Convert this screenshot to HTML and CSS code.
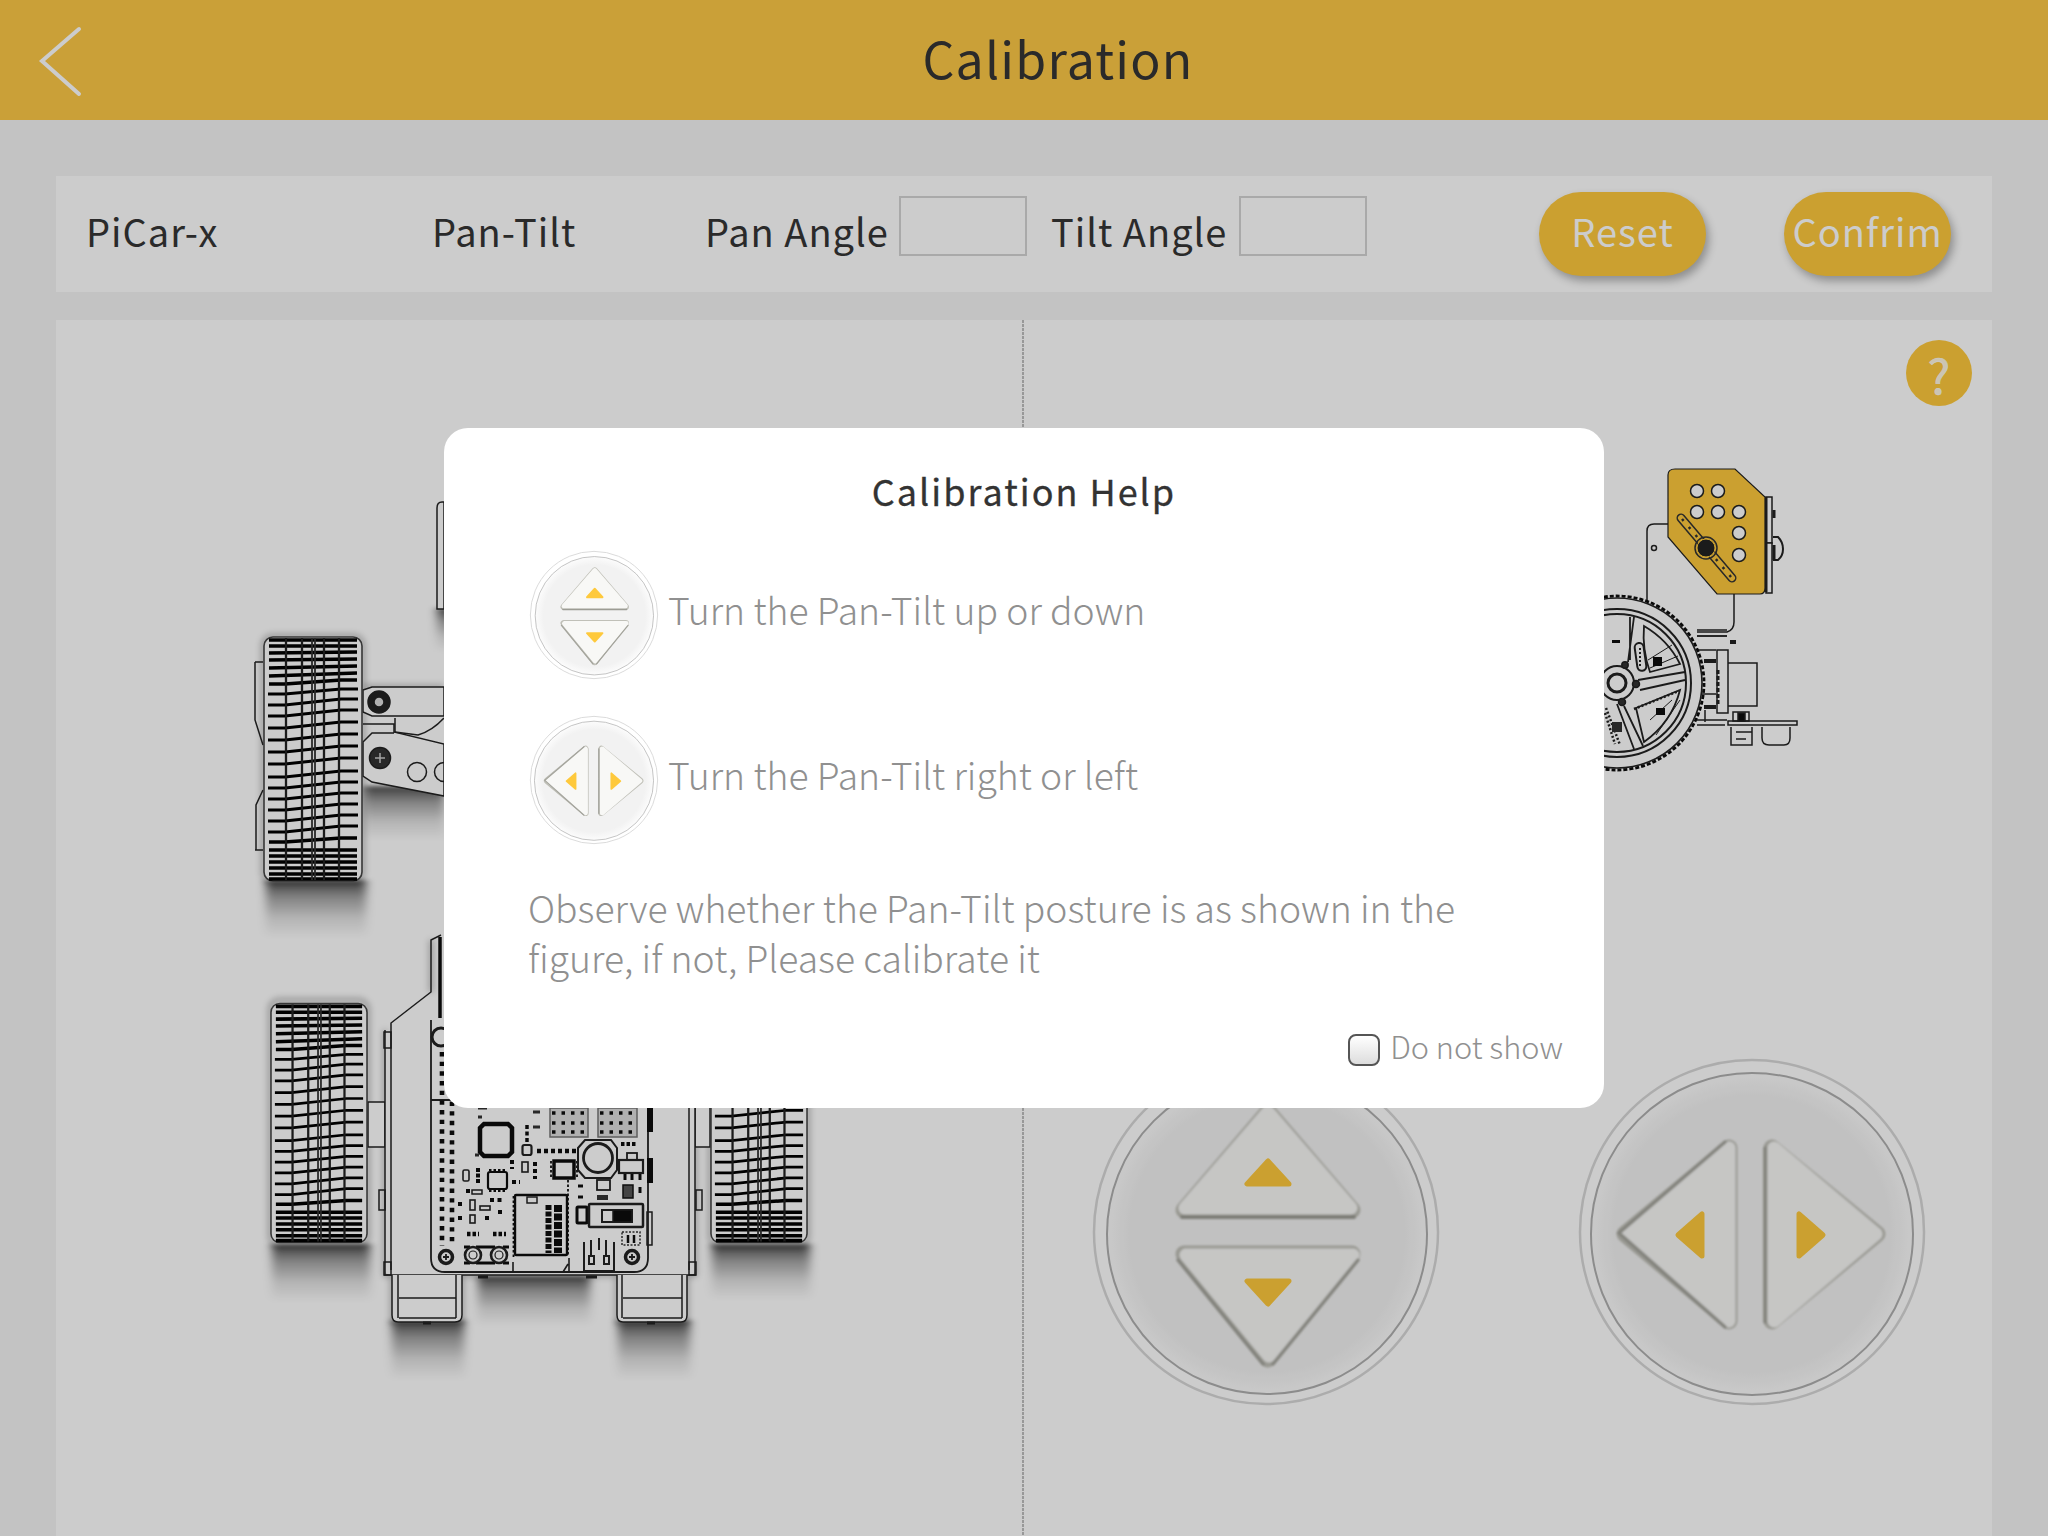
FILE: index.html
```html
<!DOCTYPE html>
<html lang="en">
<head>
<meta charset="utf-8">
<title>Calibration</title>
<link rel="stylesheet" href="styles.css">
</head>
<body>
<svg class="defs" width="0" height="0" aria-hidden="true">
  <defs>
    <radialGradient id="btn-fill">
      <stop offset="0" stop-color="#f2f2f2"/>
      <stop offset=".86" stop-color="#f2f2f2"/>
      <stop offset="1" stop-color="#fcfcfc"/>
    </radialGradient>
    <linearGradient id="shade" x1="0" y1="0" x2="0" y2="1">
      <stop offset="0" stop-color="#000" stop-opacity=".7"/>
      <stop offset=".3" stop-color="#000" stop-opacity=".36"/>
      <stop offset=".65" stop-color="#000" stop-opacity=".12"/>
      <stop offset="1" stop-color="#000" stop-opacity="0"/>
    </linearGradient>
    <filter id="soft" x="-10%" y="-10%" width="120%" height="120%"><feGaussianBlur stdDeviation=".7"/></filter>
    <filter id="soft2" x="-10%" y="-10%" width="120%" height="120%"><feGaussianBlur stdDeviation=".8"/></filter>
    <filter id="blurx" x="-20%" y="-20%" width="140%" height="140%"><feGaussianBlur stdDeviation="5 2"/></filter>
    <filter id="halo" x="-20%" y="-20%" width="140%" height="140%"><feGaussianBlur stdDeviation="3"/></filter>

    <symbol id="pad-ud" viewBox="-173 -173 346 346" overflow="visible">
      <circle r="172" fill="#fff" stroke="#d8d8d8" stroke-width="2.5"/>
      <circle cx="1" cy="2" r="160" fill="url(#btn-fill)" stroke="#b0b0b0" stroke-width="2"/>
      <g filter="url(#soft2)">
        <path d="M2 -120 -82 -22H86Z" fill="#f8f8f6" stroke="#c0c0b8" stroke-width="17" stroke-linejoin="round"/>
        <path d="M2 -120 -81 -24H85Z" fill="#f8f8f6" stroke="#f8f8f6" stroke-width="13" stroke-linejoin="round"/>
        <path d="M-84 -15H88" fill="none" stroke="#9c9c94" stroke-width="4" stroke-linecap="round"/>
        <path d="M2 127 -82 22H86Z" fill="#f8f8f6" stroke="#c0c0b8" stroke-width="17" stroke-linejoin="round"/>
        <path d="M3 124 -80 23H87Z" fill="#f8f8f6" stroke="#f8f8f6" stroke-width="13" stroke-linejoin="round"/>
        <path d="M-88 28 -3 132M92 28 7 132" fill="none" stroke="#a4a49c" stroke-width="3.5" stroke-linecap="round"/>
      </g>
      <path d="M2 -71 -19 -48H23Z" fill="#fec93c" stroke="#fec93c" stroke-width="5" stroke-linejoin="round"/>
      <path d="M2 72 -19 49H23Z" fill="#fec93c" stroke="#fec93c" stroke-width="5" stroke-linejoin="round"/>
    </symbol>

    <symbol id="pad-lr" viewBox="-173 -173 346 346" overflow="visible">
      <circle r="172" fill="#fff" stroke="#d8d8d8" stroke-width="2.5"/>
      <circle cy="2" r="161" fill="url(#btn-fill)" stroke="#b0b0b0" stroke-width="2"/>
      <g filter="url(#soft2)">
        <path d="M-127 2 -23 -84V89Z" fill="#f8f8f6" stroke="#c0c0b8" stroke-width="17" stroke-linejoin="round"/>
        <path d="M-125 1 -23 -84V89Z" fill="#f8f8f6" stroke="#f8f8f6" stroke-width="13" stroke-linejoin="round"/>
        <path d="M-27 -90 -133 1 -27 95" fill="none" stroke="#a4a49c" stroke-width="3.5" stroke-linecap="round"/>
        <path d="M125 2 20 -84V89Z" fill="#f8f8f6" stroke="#c0c0b8" stroke-width="17" stroke-linejoin="round"/>
        <path d="M124 2 22 -84V89Z" fill="#f8f8f6" stroke="#f8f8f6" stroke-width="13" stroke-linejoin="round"/>
        <path d="M13 -84V90" fill="none" stroke="#a4a49c" stroke-width="3.5" stroke-linecap="round"/>
      </g>
      <path d="M-74 3 -50 -18V24Z" fill="#fec93c" stroke="#fec93c" stroke-width="5" stroke-linejoin="round"/>
      <path d="M71 3 47 -18V24Z" fill="#fec93c" stroke="#fec93c" stroke-width="5" stroke-linejoin="round"/>
    </symbol>

    <symbol id="wheel" viewBox="0 0 100 246" overflow="visible">
      <rect x="1" y="1" width="98" height="244" rx="9" fill="#fff" stroke="#444" stroke-width="1.6"/>
      <g fill="none" stroke="#000">
        <path stroke-width="3.6" d="M6 4H94M6 10H94M6 17 94 16M6 24 94 23M6 32 94 30M6 40 94 37M6 48H22L78 44H94M6 206H22L78 202H94M6 214H94M6 220H94M6 226H94M6 232H94M6 238H94M6 243H94"/>
        <path stroke-width="2.8" d="M5 58H22L78 53H95M5 69H22L78 63H95M5 80H22L78 74H95M5 92H22L78 86H95M5 104H22L78 98H95M5 116H22L78 110H95M5 128H22L78 122H95M5 141H22L78 135H95M5 152H22L78 146H95M5 163H22L78 157H95M5 174H22L78 168H95M5 185H22L78 179H95M5 196H22L78 190H95"/>
        <path stroke-width="2.3" stroke="#222" d="M23 2V244M39 2V244M61 2V244M76 2V244"/>
        <path stroke-width="1.8" stroke="#333" d="M49 2V244M52 2V244"/>
      </g>
    </symbol>
  </defs>
</svg>

<div class="app">
  <header class="topbar">
    <svg class="back" viewBox="0 0 44 72" aria-label="Back">
      <path d="M41 3 4 35 41 68"/>
    </svg>
    <h1 class="topbar-title">Calibration</h1>
  </header>

  <main class="content">
    <section class="toolbar">
      <span class="tool-text tool-model">PiCar-x</span>
      <span class="tool-text tool-part">Pan-Tilt</span>
      <label class="tool-text tool-field tool-pan">Pan Angle<input class="angle" type="text"></label>
      <label class="tool-text tool-field tool-tilt">Tilt Angle<input class="angle" type="text"></label>
      <button class="pill pill-reset" type="button">Reset</button>
      <button class="pill pill-confirm" type="button">Confrim</button>
    </section>

    <section class="stage">
      <div class="half half-left">
        <svg class="art" viewBox="56 320 968 1216">
          <!-- shadows -->
          <g filter="url(#halo)" fill="none" stroke="#000" stroke-opacity=".4" stroke-width="3">
            <rect x="263" y="636" width="100" height="246" rx="9"/>
            <rect x="270" y="1000" width="98" height="246" rx="9"/>
            <rect x="710" y="1000" width="98" height="246" rx="9"/>
            <path d="M363 687H444M385 1030V1275H695V1030M392 1275V1322H462V1275M617 1275V1322H687V1275M431 992V940"/>
          </g>
          <g filter="url(#blurx)">
            <rect x="266" y="880" width="100" height="58" fill="url(#shade)"/>
            <rect x="364" y="786" width="80" height="54" fill="url(#shade)"/>
            <rect x="437" y="608" width="20" height="44" fill="url(#shade)"/>
            <rect x="272" y="1244" width="98" height="58" fill="url(#shade)"/>
            <rect x="712" y="1244" width="98" height="56" fill="url(#shade)"/>
            <rect x="392" y="1320" width="72" height="60" fill="url(#shade)"/>
            <rect x="618" y="1320" width="72" height="60" fill="url(#shade)"/>
            <rect x="478" y="1276" width="112" height="50" fill="url(#shade)"/>
          </g>
          <g filter="url(#soft)" fill="none" stroke="#222" stroke-width="1.5">
            <!-- upper axle assembly -->
            <path fill="#fff" d="M437 609Q438 609 444 609V502H442Q437 502 437 508Z"/>
            <path fill="#fff" d="M363 690 372 687H444V716H372L363 712ZM363 724H394V732L444 744V796L372 782 363 776V742L372 733H394"/>
            <path d="M395 718V732L418 735Q432 731 444 718"/>
            <path stroke-width="1.5" d="M255 662H263M255 662V720L263 745M255 850H263M256 850V805L263 790"/>
            <circle cx="379" cy="702" r="11" fill="#222"/>
            <circle cx="379" cy="702" r="5" fill="#ddd"/>
            <circle cx="380" cy="758" r="10.5" fill="#333"/>
            <path stroke="#ccc" stroke-width="1.5" d="M375 758H385M380 753V763"/>
            <circle cx="417" cy="772" r="9.5"/>
            <circle cx="444" cy="772" r="9.5"/>
            <use href="#wheel" x="263" y="636" width="100" height="246"/>

            <!-- chassis -->
            <rect x="368" y="1102" width="17" height="45" fill="#fff"/>
            <rect x="695" y="1102" width="15" height="45" fill="#fff"/>
            <path fill="#fff" d="M385 1030V1270Q385 1275 391 1275H690Q695 1275 695 1270V1030H385Z" stroke="none"/>
            <path d="M385 1030V1275H695V1030M391 1270V1023L431 992V940L441 935M689 1108V1270"/>
            <path stroke-width="3.5" stroke="#111" d="M440 937V1018"/>
            <rect x="384" y="1032" width="7" height="16"/>
            <rect x="384" y="1262" width="7" height="13"/>
            <rect x="689" y="1262" width="7" height="13"/>
            <rect x="379" y="1190" width="6" height="20"/>
            <rect x="696" y="1190" width="6" height="20"/>
            <use href="#wheel" x="270" y="1000" width="98" height="246"/>
            <use href="#wheel" x="710" y="1000" width="98" height="246"/>

            <!-- PCB -->
            <path fill="#fff" stroke-width="1.8" d="M431 1020V1258Q431 1272 445 1272H634Q648 1272 648 1258V1100H431Z"/>
            <circle cx="441" cy="1037" r="9" stroke-width="3"/>
            <path stroke-dasharray="4.4 5.27" stroke-width="4.6" stroke="#111" d="M442 1052V1246"/>
            <path stroke-dasharray="4.4 5.27" stroke-width="4.6" stroke="#111" d="M452 1101.5V1246"/>
            <g stroke="#777" stroke-width="1.5" fill="#dcdcdc">
              <rect x="550" y="1108" width="38" height="29"/>
              <rect x="598" y="1108" width="39" height="29"/>
            </g>
            <path stroke="#111" stroke-width="3.5" stroke-dasharray="3.5 6" d="M552 1113H588M552 1123H588M552 1132H588M600 1113H637M600 1123H637M600 1132H637"/>
            <path stroke="#111" stroke-width="4.5" d="M484 1124H508L512 1128V1152L508 1156H484L480 1152V1128Z"/>
            <path stroke="#333" stroke-width="3" d="M475 1155H479M478 1108H487M533 1112H540M533 1127H540M478 1117H482"/>
            <path stroke="#111" stroke-width="3.5" stroke-dasharray="4 2.5" d="M527 1125V1142"/>
            <rect x="522.5" y="1145" width="9" height="10" rx="2" stroke-width="2.2"/>
            <path stroke="#111" stroke-width="4.5" stroke-dasharray="4 3" d="M537 1151H576"/>
            <path stroke="#111" stroke-width="6" d="M650 1108V1132M650 1158V1183"/>
            <rect x="554" y="1161" width="20" height="17" stroke="#111" stroke-width="3.5"/>
            <path stroke="#111" stroke-width="1.8" stroke-dasharray="2.5 2" d="M551 1161V1178M577 1161V1178"/>
            <rect x="522" y="1162" width="6" height="10" stroke-width="1.6"/>
            <path stroke="#111" stroke-width="4" stroke-dasharray="4 3" d="M535 1162V1179M512 1160V1169M512 1182H520"/>
            <rect x="488" y="1172" width="19" height="17" rx="2" stroke="#111" stroke-width="2.2"/>
            <path stroke="#111" stroke-width="2.2" stroke-dasharray="2.5 2" d="M489 1170H507M489 1191H507"/>
            <rect x="463" y="1170" width="6" height="11" rx="1.5" stroke-width="1.6"/>
            <path stroke="#111" stroke-width="4" stroke-dasharray="4 1.5" d="M478 1168V1184"/>
            <path stroke="#111" stroke-width="4" d="M466 1191H470"/>
            <rect x="472" y="1190" width="10" height="4" stroke-width="1.5"/>
            <path stroke="#111" stroke-width="4" stroke-dasharray="4 3.5" d="M490 1200H502M500 1210V1217M460 1202V1208M460 1216V1222M485 1218H489"/>
            <rect x="470" y="1200" width="5" height="10" stroke-width="1.6"/>
            <rect x="470" y="1215" width="5" height="8" stroke-width="1.6"/>
            <rect x="480" y="1206" width="10" height="4" stroke-width="1.6"/>
            <path stroke="#111" stroke-width="4.5" stroke-dasharray="3.5 2" d="M467 1234H479M493 1234H506"/>

            <path stroke="#111" stroke-width="1.8" stroke-dasharray="2.5 2" d="M513.5 1196V1258M568 1180V1256"/>
            <rect x="515" y="1195" width="52" height="60" rx="1" stroke="#111" stroke-width="2.4" fill="#fff"/>
            <rect x="527" y="1197" width="10" height="6" stroke-width="1.5"/>
            <path stroke="#111" stroke-width="6" stroke-dasharray="5 1.5" d="M548.5 1205V1253"/>
            <path stroke="#111" stroke-width="8" stroke-dasharray="7 1.5" d="M558 1205V1253"/>
            <path stroke-width="1.6" d="M513 1272V1262M569 1272V1258M563 1272 568 1264"/>

            <path stroke-width="2" d="M585 1140H611L617 1148V1170L611 1178H585L578 1170V1148Z" fill="#fff"/>
            <circle cx="598" cy="1158" r="14.5" stroke-width="2.8"/>
            <rect x="597" y="1180" width="13" height="10" stroke-width="1.8"/>
            <rect x="597" y="1195" width="11" height="5" fill="#333" stroke="none"/>
            <rect x="619" y="1160" width="24" height="13" stroke-width="2.2"/>
            <rect x="627" y="1153" width="10" height="7" stroke-width="1.8"/>
            <path stroke="#111" stroke-width="3" d="M625 1174V1180M632 1174V1180M640 1174V1180"/>
            <path stroke="#111" stroke-width="4" stroke-dasharray="3.5 2" d="M621 1144H637"/>
            <rect x="623" y="1185" width="10" height="13" fill="#555" stroke="#111"/>
            <path stroke="#111" stroke-width="3" d="M640 1187V1193M578 1186H583M578 1197H583"/>
            <rect x="577" y="1207" width="10" height="16" rx="1" stroke="#111" stroke-width="3"/>
            <rect x="589" y="1204" width="54" height="23" rx="1" stroke-width="2.5"/>
            <rect x="602" y="1210" width="30" height="12" stroke-width="2"/>
            <rect x="613" y="1210" width="19" height="12" fill="#111"/>
            <rect x="647" y="1212" width="5" height="33" stroke-width="1.5"/>
            <rect x="622" y="1232" width="18" height="13" stroke-dasharray="2 1.5" stroke="#333"/>
            <path stroke="#111" stroke-width="2.5" d="M628 1235V1243M634 1235V1243"/>
            <path stroke-width="2" d="M584 1242V1271H614V1242M589 1256V1264H594V1256ZM604 1256V1264H609V1256ZM591 1240V1256M606 1240V1256M599 1238V1250"/>
            <circle cx="446" cy="1257" r="6.5" stroke-width="3.5"/>
            <path stroke-width="1.8" d="M443 1257H449M446 1254V1260"/>
            <circle cx="632" cy="1257" r="6.5" stroke-width="3.5"/>
            <path stroke-width="1.8" d="M629 1257H635M632 1254V1260"/>
            <path stroke="#111" stroke-width="3" d="M464 1247H470M464 1263H470M476 1247H495M476 1263H495M503 1247H509M503 1263H509"/>
            <circle cx="473" cy="1255" r="8" stroke-width="2.6"/>
            <circle cx="473" cy="1255" r="4" stroke-width="1.2"/>
            <circle cx="499" cy="1255" r="8" stroke-width="2.6"/>
            <circle cx="499" cy="1255" r="4" stroke-width="1.2"/>

            <!-- motors -->
            <path fill="#fff" d="M392 1275V1315Q392 1322 398 1322H455Q462 1322 462 1315V1275M398 1275V1318M456 1275V1318M399 1298H456M399 1318H456"/>
            <path fill="#fff" d="M617 1275V1315Q617 1322 623 1322H681Q687 1322 687 1315V1275M622 1275V1318M682 1275V1318M623 1298H682M623 1318H682"/>
            <path stroke-width="3" d="M478 1277H488M586 1277H597M423 1323H431M647 1323H655"/>
          </g>
        </svg>
      </div>
      <div class="half half-right">
        <svg class="art" viewBox="1024 320 968 1216">
          <g filter="url(#soft)" fill="none" stroke="#222" stroke-width="1.5">
            <!-- bracket -->
            <path d="M1647 602V531Q1647 524 1654 524H1668M1734 594V622Q1734 630 1727 632H1697M1697 636H1727"/>
            <circle cx="1654" cy="548" r="2.5"/>
            <!-- camera side -->
            <rect x="1766" y="497" width="6" height="46" fill="#fff"/>
            <rect x="1766" y="543" width="6" height="50" fill="#fff"/>
            <path stroke-width="3" d="M1766 497V592M1774 510V518M1774 545V560"/>
            <path stroke-width="2" d="M1773 537H1778Q1783 542 1783 549 1783 556 1778 560H1773"/>
            <!-- tilt plate -->
            <path fill="#fec93c" d="M1668 475Q1668 469 1675 469H1735L1765 497V588Q1765 594 1760 594H1717L1668 537Z" stroke-width="1.2"/>
            <g fill="#fff" stroke-width="1.5">
              <circle cx="1697" cy="491" r="6.5"/><circle cx="1718" cy="491" r="6.5"/>
              <circle cx="1697" cy="512" r="6.5"/><circle cx="1718" cy="512" r="6.5"/><circle cx="1739" cy="512" r="6.5"/>
              <circle cx="1739" cy="533" r="6.5"/><circle cx="1739" cy="555" r="6.5"/>
            </g>
            <path stroke="#333" stroke-width="9" stroke-linecap="round" d="M1681 518 1732 578"/>
            <path stroke="#fec93c" stroke-width="6" stroke-linecap="round" d="M1681 518 1732 578"/>
            <path stroke="#333" stroke-width="2.5" stroke-dasharray="2.5 8" d="M1682 519 1731 577"/>
            <circle cx="1706" cy="548" r="9" fill="#222" stroke="#fec93c" stroke-width="1"/>
            <circle cx="1706" cy="548" r="11" stroke="#333" stroke-width="1.5"/>
            <!-- motor and base -->
            <rect x="1727" y="663" width="30" height="43" fill="#fff"/>
            <rect x="1717" y="650" width="11" height="63" fill="#fff"/>
            <path stroke-width="3" stroke-dasharray="4 2" d="M1718 670V705"/>
            <path d="M1697 720H1727M1697 725H1725M1697 630H1727M1697 636H1727M1697 650H1716M1697 694H1716M1705 710V722"/>
            <path stroke-width="4" d="M1704 661H1716M1704 707H1716M1730 642H1736"/>
            <rect x="1728" y="721" width="69" height="4" fill="#fff"/>
            <rect x="1733" y="712" width="16" height="9" stroke-width="1.5"/>
            <rect x="1738" y="713" width="7" height="8" fill="#111"/>
            <path d="M1731 727V745H1752V727M1736 732H1752M1736 739H1746M1762 727V738Q1762 745 1769 745H1784Q1790 745 1790 738V727"/>
            <!-- wheel -->
            <circle cx="1617" cy="683" r="85" fill="#fff" stroke-width="1.6"/>
            <circle cx="1617" cy="683" r="87" stroke="#111" stroke-width="2.8" stroke-dasharray="4 2"/>
            <circle cx="1617" cy="683" r="74" stroke-width="2"/>
            <circle cx="1617" cy="683" r="69" stroke-width="2"/>
            <path stroke-width="1.8" d="M1630 617V660M1634 617 1628 662M1685 672 1638 680M1685 680 1640 690M1643 746 1624 706M1634 749 1617 704"/>
            <path stroke-width="1.8" d="M1644 626Q1668 640 1680 664L1650 672Q1642 650 1644 626ZM1636 708 1680 690Q1672 722 1644 742Z"/>
            <path stroke-width="1" d="M1648 660 1672 645M1650 668 1678 656M1650 720 1672 700M1656 735 1680 700"/>
            <path stroke-width="2.5" stroke-dasharray="2 2" d="M1634 709 1679 691M1606 708 1620 745M1605 713 1615 744"/>
            <circle cx="1617" cy="683" r="17" stroke-width="2"/>
            <circle cx="1617" cy="683" r="9" stroke-width="3"/>
            <circle cx="1625" cy="665" r="3.2" fill="#333"/><circle cx="1636" cy="684" r="3.5" fill="#333"/><circle cx="1622" cy="702" r="3.5" fill="#333"/>
            <rect x="1636" y="643" width="9" height="28" rx="4.5" stroke-width="2" transform="rotate(-8 1640 657)"/>
            <path stroke-width="2" stroke-dasharray="2 2" d="M1640 648V666"/>
            <rect x="1653" y="657" width="9" height="9" fill="#111" stroke="none"/>
            <rect x="1656" y="708" width="9" height="7" fill="#111" stroke="none"/>
            <rect x="1612" y="640" width="8" height="3" fill="#111" stroke="none"/>
            <rect x="1612" y="722" width="10" height="10" fill="#333" stroke="none"/>
          </g>
          <use href="#pad-ud" x="1093" y="1059" width="346" height="346"/>
          <use href="#pad-lr" x="1579" y="1059" width="346" height="346"/>
        </svg>
      </div>
      <button class="help" type="button">?</button>
    </section>
  </main>

  <div class="scrim">
    <section class="dialog">
      <h2 class="dialog-title">Calibration Help</h2>
      <div class="dialog-row">
        <svg class="pad-icon" viewBox="0 0 128 128"><use href="#pad-ud" width="128" height="128"/></svg>
        <span>Turn the Pan-Tilt up or down</span>
      </div>
      <div class="dialog-row dialog-row-next">
        <svg class="pad-icon" viewBox="0 0 128 128"><use href="#pad-lr" width="128" height="128"/></svg>
        <span>Turn the Pan-Tilt right or left</span>
      </div>
      <p class="dialog-note">Observe whether the Pan-Tilt posture is as shown in the figure, if not, Please calibrate it</p>
      <label class="dialog-check"><span class="box"></span><span class="check-text">Do not show</span></label>
    </section>
  </div>
</div>
</body>
</html>
```
FILE: styles.css
```css
* { box-sizing: border-box; }
html, body { margin: 0; padding: 0; }
body {
  width: 2048px;
  height: 1536px;
  overflow: hidden;
  font-family: "Noto Sans CJK SC", "Noto Sans", sans-serif;
  color: #353535;
  background: #f4f4f4;
}
.defs { position: absolute; }
.app { position: relative; width: 2048px; height: 1536px; display: flex; flex-direction: column; overflow: hidden; }

.topbar {
  position: relative;
  flex: 0 0 120px;
  background: #fdc947;
  display: flex;
  align-items: center;
  justify-content: center;
}
.back {
  position: absolute;
  left: 38px;
  top: 26px;
  width: 44px;
  height: 72px;
  fill: none;
  stroke: #fff;
  stroke-width: 4px;
  stroke-linecap: round;
}
.topbar-title {
  margin: 0 0 5px 68px;
  font-size: 50px;
  font-weight: 400;
  line-height: 115px;
  letter-spacing: 1.2px;
  color: #353535;
}

.content {
  flex: 1;
  min-height: 0;
  padding: 56px 56px 0;
  display: flex;
  flex-direction: column;
  gap: 28px;
}
.toolbar {
  flex: 0 0 116px;
  background: #fff;
  display: flex;
  align-items: center;
}
.tool-text { font-size: 38px; letter-spacing: 1px; white-space: nowrap; position: relative; top: -4px; }
.tool-model { margin-left: 30px; width: 346px; }
.tool-part { width: 273px; }
.tool-field { display: flex; align-items: center; }
.tool-pan { width: 346px; }
.tool-tilt { width: 488px; }
.angle {
  width: 128px;
  height: 60px;
  margin: -8px 0 0 10px;
  border: 2px solid #d4d4d4;
  background: transparent;
  padding: 0;
  border-radius: 0;
  outline: none;
}
.tool-tilt .angle { margin-left: 12px; }
.pill {
  width: 167px;
  height: 84px;
  border: 0;
  border-radius: 42px;
  padding: 0 0 7px;
  background: #fec93c;
  color: #fff;
  font: inherit;
  font-size: 38px;
  letter-spacing: 1px;
  box-shadow: 3px 5px 8px rgba(0, 0, 0, .3);
}
.pill-confirm { margin-left: 78px; }

.stage {
  position: relative;
  flex: 1;
  min-height: 0;
  background: #fff;
  display: grid;
  grid-template-columns: 1fr 1fr;
}
.half { min-width: 0; height: 1216px; position: relative; }
.half-left::after {
  content: "";
  position: absolute;
  right: 0;
  top: 0;
  bottom: 0;
  width: 2px;
  background: repeating-linear-gradient(to bottom, #bfbfbf 0 3px, transparent 3px 4px);
}
.art { display: block; width: 968px; height: 1216px; }
.help {
  position: absolute;
  right: 20px;
  top: 20px;
  width: 66px;
  height: 66px;
  border: 0;
  border-radius: 50%;
  padding: 0;
  background: #fec93c;
  color: rgba(255, 255, 255, .85);
  font: inherit;
  font-size: 48px;
  line-height: 66px;
  font-weight: 400;
  -webkit-text-stroke: .6px rgba(255, 255, 255, .85);
}

.scrim {
  position: absolute;
  inset: 0;
  background: rgba(0, 0, 0, .2);
  display: flex;
  align-items: center;
  justify-content: center;
}
.dialog {
  width: 1160px;
  height: 680px;
  background: #fff;
  border-radius: 24px;
  padding: 42px 42px 0 84px;
  color: #909090;
}
.dialog-title {
  margin: 0 0 41px -42px;
  font-size: 36px;
  line-height: 40px;
  font-weight: 400;
  letter-spacing: 2px;
  text-align: center;
  color: #333;
  -webkit-text-stroke: .3px #333;
}
.dialog-row {
  display: flex;
  align-items: center;
  gap: 10px;
  height: 128px;
  padding-left: 2px;
  font-size: 37.3px;
  font-weight: 300;
  color: #909090;
}
.dialog-row span { position: relative; top: -6px; }
.dialog-row-next { margin-top: 37px; }
.pad-icon { width: 128px; height: 128px; flex: none; overflow: visible; }
.dialog-note {
  margin: 38px 0 0;
  font-size: 37.3px;
  font-weight: 300;
  line-height: 50px;
  width: 1000px;
}
.dialog-check {
  margin-top: 48px;
  height: 40px;
  display: flex;
  align-items: center;
  justify-content: flex-end;
  gap: 10px;
  font-size: 30.7px;
  color: #909090;
}
.check-text { position: relative; top: -5px; font-weight: 300; margin-right: -1px; }
.box {
  width: 32px;
  height: 32px;
  border: 2.5px solid #555;
  border-radius: 8px;
  background: linear-gradient(#fff, #ddd);
}
```
